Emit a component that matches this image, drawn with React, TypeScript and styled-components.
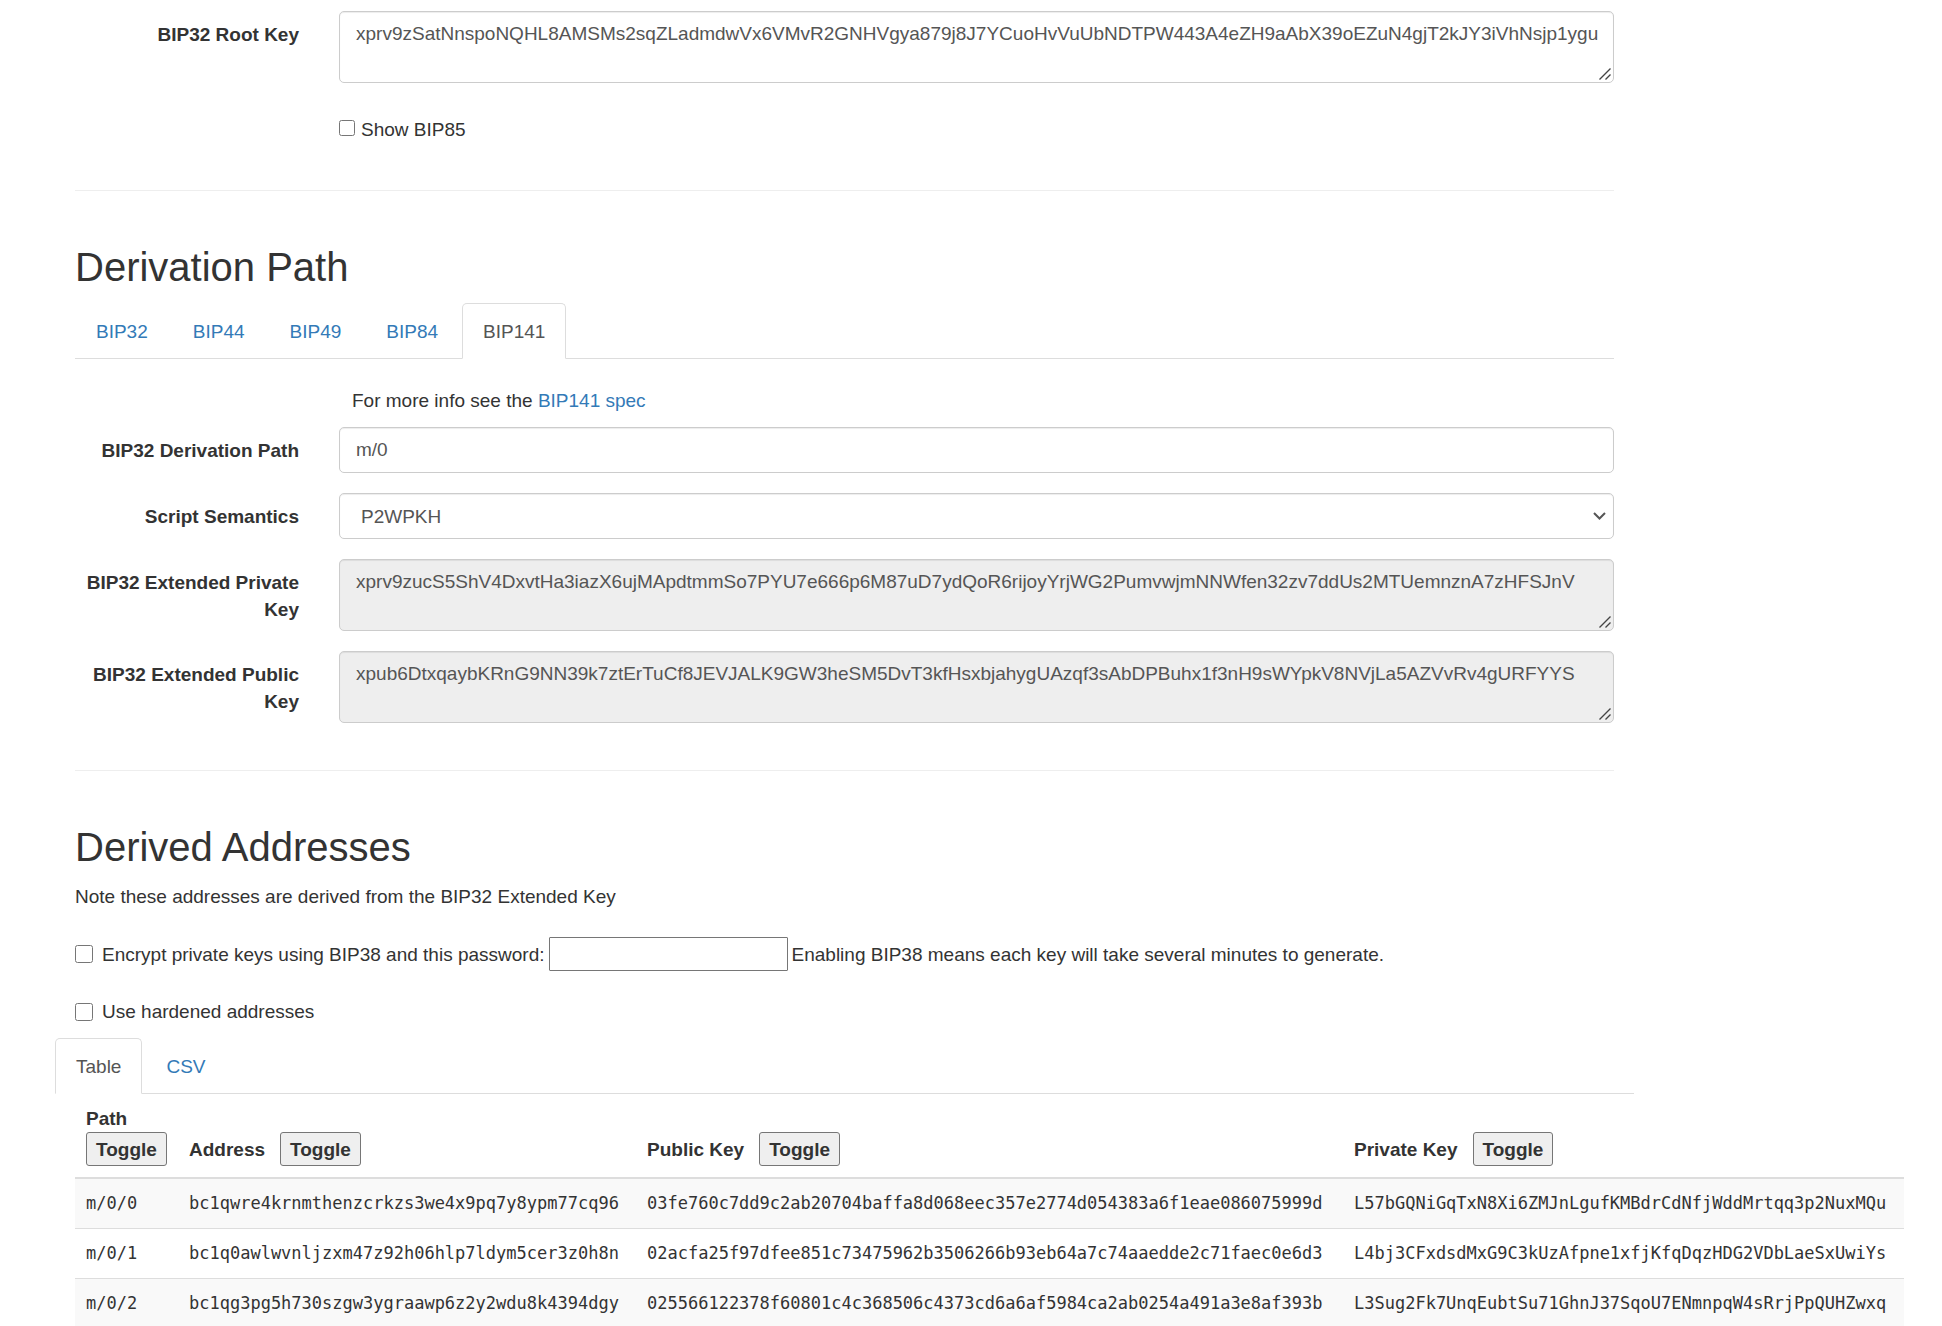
import React from "react";
import styled, { createGlobalStyle, css } from "styled-components";

const color = {
  text: "#333",
  field: "#555",
  link: "#337ab7",
  line: "#ddd",
  rule: "#eee",
  border: "#ccc",
};
const sans = `"Helvetica Neue", Helvetica, "Liberation Sans", Arial, sans-serif`;
const mono = `Consolas, "DejaVu Sans Mono", monospace`;

const GlobalStyle = createGlobalStyle`
  *, *::before, *::after { box-sizing: border-box; }
  body {
    margin: 0;
    background: #fff;
    color: ${color.text};
    font-family: ${sans};
    font-size: 19px;
    line-height: 27px;
  }
  input, select, textarea, button { font: inherit; color: inherit; margin: 0; }
`;

const Page = styled.main`
  max-width: 1635px;
  padding: 11px 21px 0 75px;
`;

const Group = styled.div`
  display: grid;
  grid-template-columns: 264px minmax(0, 1fr);
  margin: 0 -20px 20px;
`;

const Cell = styled.div`
  grid-column: 2;
  padding: 0 20px;
`;

const Label = styled.label`
  padding: 10px 20px 0;
  font-weight: 700;
  text-align: right;
`;

const control = css`
  display: block;
  width: 100%;
  padding: 8px 12px 8px 16px;
  border: 1px solid ${color.border};
  border-radius: 5px;
  background: #fff;
  color: ${color.field};
  box-shadow: inset 0 1px 1px rgba(0, 0, 0, 0.075);
`;

const TextInput = styled.input`
  ${control}
  height: 46px;
`;

const FieldBox = styled.div`
  position: relative;
`;

const TextArea = styled.textarea`
  ${control}
  height: 72px;
  resize: vertical;
  &:read-only { background: #eee; }
  &::-webkit-resizer { background: transparent; }
`;

const Grip = styled.svg`
  position: absolute;
  right: 3px;
  bottom: 3px;
  width: 12px;
  height: 12px;
  pointer-events: none;
`;

const Select = styled.select`
  ${control}
  height: 46px;
  padding-left: 21px;
  appearance: none;
`;

const Chevron = styled.svg`
  position: absolute;
  top: 50%;
  right: 8px;
  width: 13px;
  height: 8px;
  margin-top: -4px;
  pointer-events: none;
`;

const CheckLabel = styled.label<{ $inline?: boolean }>`
  display: flex;
  align-items: ${(p) => (p.$inline ? "baseline" : "center")};
  gap: ${(p) => (p.$inline ? 6 : 9)}px;
`;

const CheckCell = styled(Cell)`
  padding-top: 13px;
`;

const Checkbox = styled.input<{ $size: number }>`
  flex: none;
  width: ${(p) => p.$size}px;
  height: ${(p) => p.$size}px;
`;

const Info = styled.p`
  margin: 0 0 -7px;
  padding-left: 13px;
`;

const Rule = styled.hr`
  margin: 47px 0 27px;
  border: 0;
  border-top: 1px solid ${color.rule};
`;

const Heading = styled.h2`
  margin: 54px 0 14px;
  font-size: 40px;
  font-weight: 400;
  line-height: 44px;
`;

const Tabs = styled.nav<{ $wide?: boolean }>`
  display: flex;
  gap: 3px;
  margin: 0 ${(p) => (p.$wide ? "-20px" : "0")};
  border-bottom: 1px solid ${color.line};
`;

const Tab = styled.a<{ $active?: boolean }>`
  margin-bottom: -1px;
  padding: 14px 20px 13px;
  border: 1px solid ${(p) => (p.$active ? color.line : "transparent")};
  border-bottom-color: ${(p) => (p.$active ? "#fff" : "transparent")};
  border-radius: 5px 5px 0 0;
  background: ${(p) => (p.$active ? "#fff" : "transparent")};
  color: ${(p) => (p.$active ? color.field : color.link)};
  text-decoration: none;
`;

const Panel = styled.div`
  padding-top: 28px;
`;

const Link = styled.a`
  color: ${color.link};
  text-decoration: none;
`;

const Note = styled.p`
  margin: 0 0 27px;
`;

const Options = styled.div`
  display: flex;
  align-items: center;
  flex-wrap: wrap;
  gap: 4px;
  margin-bottom: 27px;
`;

const Password = styled.input`
  width: 239px;
  height: 34px;
  padding: 1px 3px;
  border: 1px solid #767676;
  border-radius: 1px;
`;

const Hardened = styled.div`
  margin-bottom: 13px;
`;

const Table = styled.table`
  table-layout: fixed;
  width: 1829px;
  border-collapse: collapse;
`;

const Col = styled.col<{ $width: number }>`
  width: ${(p) => p.$width}px;
`;

const HeadCell = styled.th`
  padding: 11px;
  border-bottom: 2px solid ${color.line};
  text-align: left;
  vertical-align: bottom;
`;

const HeadRow = styled.div<{ $stacked?: boolean }>`
  display: flex;
  flex-direction: ${(p) => (p.$stacked ? "column" : "row")};
  align-items: ${(p) => (p.$stacked ? "flex-start" : "center")};
  gap: ${(p) => (p.$stacked ? 0 : 15)}px;
`;

const Toggle = styled.button`
  height: 34px;
  padding: 0 9px;
  border: 1px solid #767676;
  border-radius: 3px;
  background: #efefef;
  line-height: 27px;
`;

const BodyRow = styled.tr`
  &:nth-child(odd) { background: #f9f9f9; }
`;

const BodyCell = styled.td`
  padding: 11px;
  border-top: 1px solid ${color.line};
  font-family: ${mono};
  font-size: 17px;
  white-space: nowrap;
`;

const purposes = ["BIP32", "BIP44", "BIP49", "BIP84", "BIP141"];

const columns = [
  { title: "Path", width: 103 },
  { title: "Address", width: 458 },
  { title: "Public Key", width: 707 },
  { title: "Private Key", width: 561 },
];

const addresses = [
  ["m/0/0", "bc1qwre4krnmthenzcrkzs3we4x9pq7y8ypm77cq96", "03fe760c7dd9c2ab20704baffa8d068eec357e2774d054383a6f1eae086075999d", "L57bGQNiGqTxN8Xi6ZMJnLgufKMBdrCdNfjWddMrtqq3p2NuxMQu"],
  ["m/0/1", "bc1q0awlwvnljzxm47z92h06hlp7ldym5cer3z0h8n", "02acfa25f97dfee851c73475962b3506266b93eb64a7c74aaedde2c71faec0e6d3", "L4bj3CFxdsdMxG9C3kUzAfpne1xfjKfqDqzHDG2VDbLaeSxUwiYs"],
  ["m/0/2", "bc1qg3pg5h730szgw3ygraawp6z2y2wdu8k4394dgy", "025566122378f60801c4c368506c4373cd6a6af5984ca2ab0254a491a3e8af393b", "L3Sug2Fk7UnqEubtSu71GhnJ37SqoU7ENmnpqW4sRrjPpQUHZwxq"],
];

function KeyField({ id, label, value, readOnly = false }: { id: string; label: string; value: string; readOnly?: boolean }) {
  return (
    <Group>
      <Label htmlFor={id}>{label}</Label>
      <Cell>
        <FieldBox>
          <TextArea id={id} spellCheck={false} readOnly={readOnly} defaultValue={value} />
          <Grip viewBox="0 0 12 12" aria-hidden="true">
            <path d="M0.5 11.5l11-11M6.5 11.5l5-5" fill="none" stroke="#444" strokeWidth="1.4" />
          </Grip>
        </FieldBox>
      </Cell>
    </Group>
  );
}

export default function App() {
  return (
    <>
      <GlobalStyle />
      <Page>
        <KeyField
          id="root-key"
          label="BIP32 Root Key"
          value="xprv9zSatNnspoNQHL8AMSMs2sqZLadmdwVx6VMvR2GNHVgya879j8J7YCuoHvVuUbNDTPW443A4eZH9aAbX39oEZuN4gjT2kJY3iVhNsjp1ygu"
        />
        <Group>
          <CheckCell>
            <CheckLabel $inline>
              <Checkbox type="checkbox" $size={16} />
              Show BIP85
            </CheckLabel>
          </CheckCell>
        </Group>

        <Rule />

        <Heading>Derivation Path</Heading>
        <Tabs aria-label="Derivation path">
          {purposes.map((name) => (
            <Tab key={name} href={`#${name.toLowerCase()}`} $active={name === "BIP141"}>
              {name}
            </Tab>
          ))}
        </Tabs>
        <Panel>
          <Group>
            <Cell>
              <Info>
                For more info see the <Link href="#bip141-spec">BIP141 spec</Link>
              </Info>
            </Cell>
          </Group>
          <Group>
            <Label htmlFor="path">BIP32 Derivation Path</Label>
            <Cell>
              <TextInput id="path" type="text" defaultValue="m/0" />
            </Cell>
          </Group>
          <Group>
            <Label htmlFor="semantics">Script Semantics</Label>
            <Cell>
              <FieldBox>
                <Select id="semantics" defaultValue="P2WPKH">
                  <option>P2WPKH</option>
                </Select>
                <Chevron viewBox="0 0 13 8" aria-hidden="true">
                  <path d="M1 1l5.5 5.5L12 1" fill="none" stroke="#555" strokeWidth="2" />
                </Chevron>
              </FieldBox>
            </Cell>
          </Group>
          <KeyField
            id="xprv"
            label="BIP32 Extended Private Key"
            readOnly
            value="xprv9zucS5ShV4DxvtHa3iazX6ujMApdtmmSo7PYU7e666p6M87uD7ydQoR6rijoyYrjWG2PumvwjmNNWfen32zv7ddUs2MTUemnznA7zHFSJnV"
          />
          <KeyField
            id="xpub"
            label="BIP32 Extended Public Key"
            readOnly
            value="xpub6DtxqaybKRnG9NN39k7ztErTuCf8JEVJALK9GW3heSM5DvT3kfHsxbjahygUAzqf3sAbDPBuhx1f3nH9sWYpkV8NVjLa5AZVvRv4gURFYYS"
          />
        </Panel>

        <Rule />

        <Heading>Derived Addresses</Heading>
        <Note>Note these addresses are derived from the BIP32 Extended Key</Note>
        <Options>
          <CheckLabel>
            <Checkbox type="checkbox" $size={18} />
            Encrypt private keys using BIP38 and this password:
          </CheckLabel>
          <Password type="password" aria-label="BIP38 password" />
          <span>Enabling BIP38 means each key will take several minutes to generate.</span>
        </Options>
        <Hardened>
          <CheckLabel>
            <Checkbox type="checkbox" $size={18} />
            Use hardened addresses
          </CheckLabel>
        </Hardened>

        <Tabs $wide aria-label="Address format">
          <Tab href="#table" $active>Table</Tab>
          <Tab href="#csv">CSV</Tab>
        </Tabs>
        <Table id="table">
          <colgroup>
            {columns.map((c) => (
              <Col key={c.title} $width={c.width} />
            ))}
          </colgroup>
          <thead>
            <tr>
              {columns.map((c, i) => (
                <HeadCell key={c.title} scope="col">
                  <HeadRow $stacked={i === 0}>
                    <span>{c.title}</span>
                    <Toggle type="button">Toggle</Toggle>
                  </HeadRow>
                </HeadCell>
              ))}
            </tr>
          </thead>
          <tbody>
            {addresses.map((row) => (
              <BodyRow key={row[0]}>
                {row.map((value) => (
                  <BodyCell key={value}>{value}</BodyCell>
                ))}
              </BodyRow>
            ))}
          </tbody>
        </Table>
      </Page>
    </>
  );
}
